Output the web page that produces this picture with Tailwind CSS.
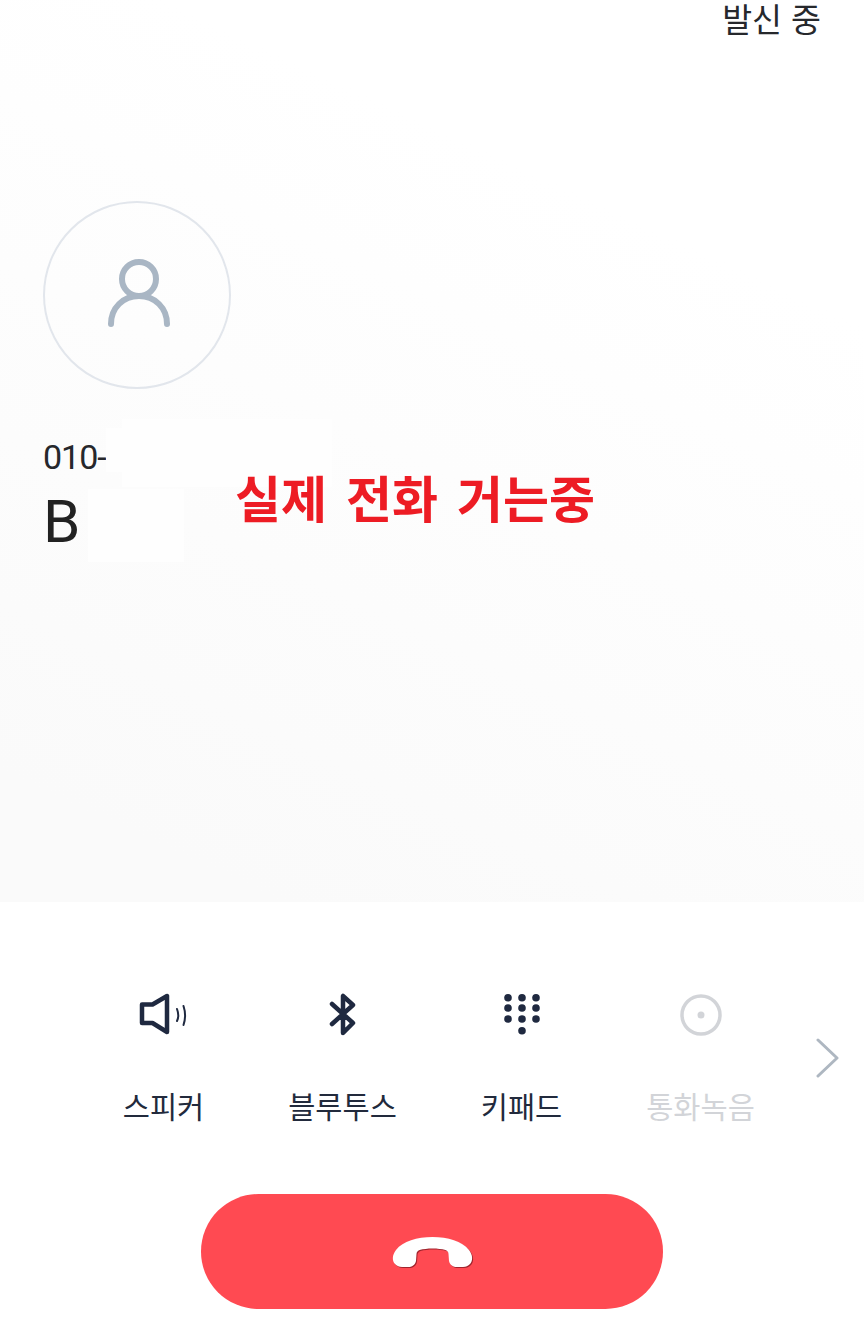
<!DOCTYPE html>
<html lang="ko">
<head>
<meta charset="utf-8">
<script src="https://cdn.jsdelivr.net/npm/@tailwindcss/browser@4"></script>
</head>
<body class="bg-white font-['Roboto','Noto_Sans_CJK_KR',sans-serif]">
<div class="w-[864px] h-[1331px] flex flex-col bg-white overflow-hidden">
  <section class="relative h-[902px] shrink-0 bg-linear-[205deg] from-white from-25% to-[#fafafa] to-90% flex flex-col pl-[43px]">
    <div class="h-[201px] flex justify-end items-start pr-[43px]">
      <span class="font-['Noto_Sans_CJK_KR',sans-serif] text-[32.500px] leading-[36px] text-[#26282c]">발신 중</span>
    </div>
    <div class="w-[188px] h-[188px] rounded-full border-2 border-[#e2e6ec] flex items-center justify-center">
      <svg class="ml-[3px]" width="66" height="72" viewBox="0 0 66 72" fill="none" stroke="#a9b6c4" stroke-width="6" stroke-linecap="round">
        <circle cx="33" cy="20" r="17"/>
        <path d="M5 65c0-16 12-28 28-28s28 12 28 28"/>
      </svg>
    </div>
    <div class="mt-[48px] text-[34px] leading-[40px] tracking-[-1px] text-[#26282c]">010-</div>
    <div class="mt-[10px] text-[60px] leading-[70px] text-[#222]">B</div>

    <div class="absolute left-[122px] top-[419px] w-[210px] h-[68px] bg-[#fefefe]"></div>
    <div class="absolute left-[106px] top-[428px] w-[16px] h-[44px] bg-[#fefefe]"></div>
    <div class="absolute left-[88px] top-[489px] w-[96px] h-[73px] bg-[#fefefe]"></div>
    <div class="absolute left-[235px] top-[464px] font-['Noto_Sans_CJK_KR',sans-serif] font-bold text-[50px] leading-[64px] text-[#ed1c24] whitespace-nowrap [word-spacing:5px]">실제 전화 거는중</div>
  </section>

  <section class="relative flex-1 flex flex-col items-center">
    <div class="mt-[88px] w-[716px] grid grid-cols-4 font-['Noto_Sans_CJK_KR',sans-serif] text-[29.500px] leading-[40px] text-center text-[#222a3c]">
      <div class="flex flex-col items-center">
        <svg class="h-[50px]" width="60" height="50" viewBox="0 0 60 50" fill="none" stroke="#1f2940" stroke-linecap="round" stroke-linejoin="round">
          <path d="M8 14.500h10.500L33 6v36l-14.500-9H8z" stroke-width="4.500"/>
          <path d="M43 19c1.500 4 1.500 9 0 12M49.500 16c2 6 2 13 0 19" stroke-width="2"/>
        </svg>
        <div class="mt-[45px]">스피커</div>
      </div>
      <div class="flex flex-col items-center">
        <svg class="h-[50px]" width="40" height="50" viewBox="0 0 40 50" fill="none" stroke="#1f2940" stroke-width="4.500" stroke-linecap="round" stroke-linejoin="round">
          <path d="M9 34 30 15 20 6v37l10-10L9 14"/>
        </svg>
        <div class="mt-[45px]">블루투스</div>
      </div>
      <div class="flex flex-col items-center">
        <svg class="h-[50px]" width="40" height="50" viewBox="0 0 40 50" fill="#1f2940">
          <circle cx="6" cy="7.700" r="3.800"/><circle cx="20" cy="7.700" r="3.800"/><circle cx="34" cy="7.700" r="3.800"/>
          <circle cx="6" cy="18" r="3.800"/><circle cx="20" cy="18" r="3.800"/><circle cx="34" cy="18" r="3.800"/>
          <circle cx="6" cy="29" r="3.800"/><circle cx="20" cy="29" r="3.800"/><circle cx="34" cy="29" r="3.800"/>
          <circle cx="20" cy="40.700" r="3.800"/>
        </svg>
        <div class="mt-[45px]">키패드</div>
      </div>
      <div class="flex flex-col items-center text-[#d2d4d8]">
        <svg class="h-[50px]" width="44" height="50" viewBox="0 0 44 50" fill="none">
          <circle cx="22" cy="25" r="19" stroke="#d2d4d8" stroke-width="3.500"/>
          <circle cx="22" cy="25" r="3.500" fill="#d2d4d8"/>
        </svg>
        <div class="mt-[45px]">통화녹음</div>
      </div>
    </div>
    <svg class="absolute left-[815px] top-[135px]" width="24" height="42" viewBox="0 0 24 42" fill="none" stroke="#aeb7c1" stroke-width="3" stroke-linecap="round" stroke-linejoin="round">
      <path d="M3 3l19 18L3 39"/>
    </svg>
    <div class="mt-[69px] w-[462px] h-[115px] rounded-full bg-[#ff4a52] flex items-center justify-center">
      <svg class="drop-shadow-[1px_1px_0_rgba(120,20,30,0.7)]" width="81" height="30" viewBox="0 0 81 30">
        <path d="M40.500 0C56 0 70 4 77 13c4 5 4 11 1 14-2 2-4 3-7 3h-6c-4 0-7-2-8-6l-.5-7c0-2-1-3-3-4-4-1-8-1.500-13-1.500s-9 .5-13 1.500c-2 1-3 2-3 4l-.5 7c-1 4-4 6-8 6h-6c-3 0-5-1-7-3C0 24 0 18 4 13 11 4 25 0 40.500 0z" fill="#fff"/>
      </svg>
    </div>
  </section>
</div>
</body>
</html>
